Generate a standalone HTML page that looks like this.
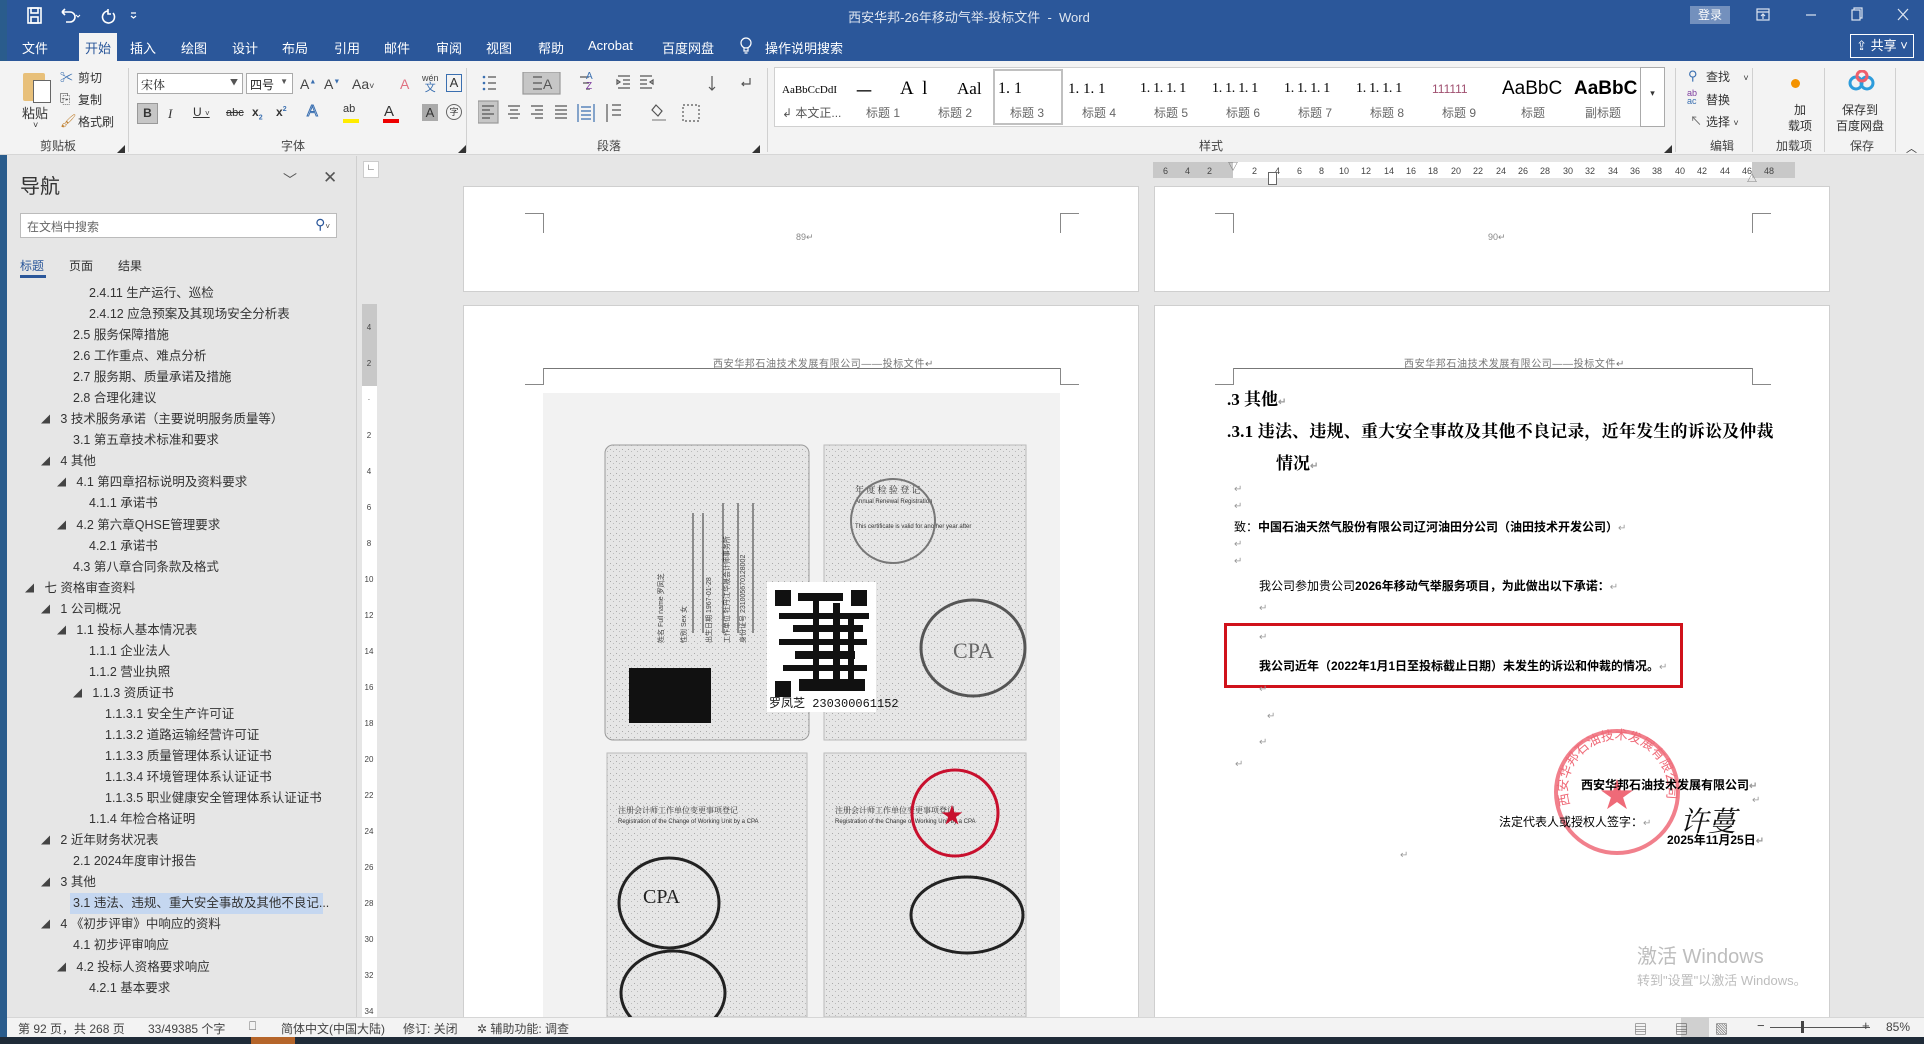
<!DOCTYPE html>
<html><head><meta charset="utf-8">
<style>
*{margin:0;padding:0;box-sizing:border-box}
body{width:1924px;height:1044px;overflow:hidden;position:relative;background:#e6e6e6;font-family:"Liberation Sans","Noto Sans CJK SC",sans-serif;color:#333}
.a{position:absolute;white-space:nowrap}
.t{font-size:13px}
#title{left:0;top:0;width:1924px;height:61px;background:#2b579a}
#rib{left:0;top:61px;width:1924px;height:94px;background:#f3f3f3;border-bottom:1px solid #d6d6d6}
.tab{color:#fff;font-size:13px;top:38px}
.gl{font-size:12px;color:#444;top:137px}
.sep{width:1px;background:#d0d0d0;top:68px;height:84px}
.nav{font-size:13px;color:#333}
.nav div{height:21.05px;line-height:21px;overflow:hidden}
.tri{font-size:9px;color:#444;line-height:10px;vertical-align:middle}
.page{background:#fff;border:1px solid #cfcfcf}
.ret{font-size:10px;color:#999}
.cm{position:absolute;border-color:#888;border-style:solid}
.rn{font-size:9px;color:#444;top:166px}
.b{font-weight:bold}
</style></head><body>
<div class="a" id="title"></div>
<div class="a" style="left:0;top:0;width:7px;height:1037px;background:#2a5c8c"></div>
<svg class="a" style="left:26px;top:6px" width="140" height="20" viewBox="0 0 140 20" fill="none" stroke="#fff" stroke-width="1.6">
<rect x="2" y="2" width="13" height="15"/><rect x="5" y="2" width="7" height="5"/><rect x="5" y="11" width="7" height="6"/>
<path d="M36 6 h8 a5 5 0 0 1 0 10 h-4 M36 6 l3 -3 M36 6 l3 3"/><path d="M50 9 l2 2 l2 -2" stroke-width="1"/>
<path d="M82 5 a6 6 0 1 0 5 2 M82 3 v5 h3"/><path d="M105 7 h5 M105 10 l2.5 2 l2.5 -2" stroke-width="1.2"/>
</svg>
<div class="a" style="left:0;width:1924px;top:7px;text-align:center;color:#dfe6f0;font-size:13px;padding-left:14px">西安华邦-26年移动气举-投标文件 &nbsp;-&nbsp; Word</div>
<div class="a" style="left:1690px;top:6px;width:40px;height:18px;background:#7390bd;color:#fff;font-size:12px;text-align:center;line-height:18px">登录</div>
<svg class="a" style="left:1752px;top:6px" width="170" height="18" fill="none" stroke="#dce4f0" stroke-width="1.2">
<rect x="5" y="3" width="12" height="11"/><path d="M5 6 h12 M11 8 v5 M9 10 l2 -2 l2 2"/>
<path d="M54 9 h10"/><rect x="100" y="4" width="8" height="10"/><path d="M102 4 v-2 h8 v10 h-2"/>
<path d="M146 3 l10 11 M156 3 l-10 11"/></svg>
<div class="a" style="left:79px;top:33px;width:38px;height:28px;background:#f3f3f3"></div>
<div class="a tab" style="left:22px">文件</div>
<div class="a tab" style="left:78px;color:#2b579a;width:40px;text-align:center">开始</div>
<div class="a tab" style="left:130px">插入</div>
<div class="a tab" style="left:181px">绘图</div>
<div class="a tab" style="left:232px">设计</div>
<div class="a tab" style="left:282px">布局</div>
<div class="a tab" style="left:334px">引用</div>
<div class="a tab" style="left:384px">邮件</div>
<div class="a tab" style="left:436px">审阅</div>
<div class="a tab" style="left:486px">视图</div>
<div class="a tab" style="left:538px">帮助</div>
<div class="a tab" style="left:588px">Acrobat</div>
<div class="a tab" style="left:662px">百度网盘</div>
<svg class="a" style="left:739px;top:37px" width="14" height="18" fill="none" stroke="#fff" stroke-width="1.2"><circle cx="7" cy="6" r="5"/><path d="M5 11 v3 h4 v-3 M5.5 16 h3"/></svg>
<div class="a tab" style="left:765px">操作说明搜索</div>
<div class="a" style="left:1850px;top:34px;width:64px;height:24px;border:1px solid #fff;color:#fff;font-size:13px;line-height:22px;text-align:center">⇪ 共享 ˅</div>

<div class="a" id="rib"></div>
<div class="a" style="left:23px;top:73px;width:22px;height:28px;background:#e8c07a;border-radius:2px"></div>
<div class="a" style="left:33px;top:80px;width:18px;height:23px;background:#fff;border:1px solid #666"></div>
<div class="a t" style="left:22px;top:103px;font-size:13px">粘贴</div>
<div class="a" style="left:33px;top:120px;font-size:9px">˅</div>
<div class="a t" style="left:60px;top:67px;color:#3a6fb0">✂</div><div class="a t" style="left:78px;top:69px;font-size:12px">剪切</div>
<div class="a t" style="left:60px;top:91px">⎘</div><div class="a t" style="left:78px;top:91px;font-size:12px">复制</div>
<div class="a t" style="left:60px;top:113px;color:#c08030">🖌</div><div class="a t" style="left:78px;top:113px;font-size:12px">格式刷</div>
<div class="a gl" style="left:40px">剪贴板</div>
<div class="a" style="left:117px;top:144px;font-size:8px">◢</div>
<div class="a sep" style="left:128px"></div>
<div class="a" style="left:137px;top:73px;width:106px;height:21px;background:#fff;border:1px solid #aaa;font-size:12px;padding:2px 3px;color:#222;font-family:'Noto Serif CJK SC',serif">宋体<span style="position:absolute;right:4px;top:3px;font-size:8px;color:#555">▼</span></div>
<div class="a" style="left:246px;top:73px;width:47px;height:21px;background:#fff;border:1px solid #aaa;font-size:12px;padding:2px 3px;color:#222">四号<span style="position:absolute;right:4px;top:3px;font-size:8px;color:#555">▼</span></div>
<div class="a" style="left:300px;top:76px;font-size:14px;color:#444">A<sup style="font-size:7px;color:#3a6fb0">▲</sup> &nbsp;A<sup style="font-size:7px;color:#3a6fb0">▼</sup> &nbsp;&nbsp;Aa<span style="font-size:9px">˅</span></div>
<div class="a" style="left:400px;top:76px;font-size:14px;color:#e07080">A</div>
<div class="a" style="left:422px;top:73px;font-size:9px;color:#444;line-height:10px;text-align:center">wén<br><span style="color:#3a6fb0;font-size:11px">文</span></div>
<div class="a" style="left:446px;top:74px;width:16px;height:18px;border:1px solid #3a6fb0;font-size:13px;text-align:center;line-height:16px">A</div>
<div class="a" style="left:137px;top:103px;width:21px;height:21px;background:#c6c6c6;border:1px solid #999;font-size:12px;font-weight:bold;text-align:center;line-height:19px">B</div>
<div class="a" style="left:168px;top:106px;font-size:13px;font-style:italic;font-family:'Liberation Serif',serif">I</div>
<div class="a" style="left:193px;top:105px;font-size:12px;text-decoration:underline">U <span style="font-size:8px;text-decoration:none">˅</span></div>
<div class="a" style="left:226px;top:107px;font-size:11px;text-decoration:line-through">abc</div>
<div class="a" style="left:252px;top:105px;font-size:12px;font-weight:bold">x<sub style="font-size:7px;color:#3a6fb0">2</sub></div>
<div class="a" style="left:276px;top:105px;font-size:12px;font-weight:bold">x<sup style="font-size:7px;color:#3a6fb0">2</sup></div>
<div class="a" style="left:307px;top:103px;font-size:16px;color:#fff;-webkit-text-stroke:1px #3a6fb0">A</div>
<div class="a" style="left:343px;top:103px;font-size:11px">ab</div><div class="a" style="left:343px;top:119px;width:16px;height:4px;background:#ffec00"></div>
<div class="a" style="left:384px;top:103px;font-size:15px">A</div><div class="a" style="left:383px;top:119px;width:16px;height:4px;background:#e00"></div>
<div class="a" style="left:422px;top:104px;width:16px;height:17px;background:#aaa;font-size:13px;text-align:center;line-height:17px">A</div>
<div class="a" style="left:446px;top:104px;width:16px;height:16px;border:1px solid #666;border-radius:50%;font-size:9px;text-align:center;line-height:14px">字</div>
<div class="a gl" style="left:281px">字体</div>
<div class="a" style="left:458px;top:144px;font-size:8px">◢</div>
<div class="a sep" style="left:466px"></div>
<svg class="a" style="left:478px;top:72px" width="290" height="56" fill="none" stroke="#555" stroke-width="1.2">
<g><circle cx="6" cy="5" r="1.3" fill="#3a6fb0" stroke="none"/><circle cx="6" cy="11" r="1.3" fill="#3a6fb0" stroke="none"/><circle cx="6" cy="17" r="1.3" fill="#3a6fb0" stroke="none"/><path d="M10 5h8M10 11h8M10 17h8"/></g>
<rect x="45" y="0" width="37" height="22" fill="#c6c6c6" stroke="#999"/><path d="M55 5h9M55 11h9M55 17h9"/>
<path d="M102 5h9M105 11h6M108 17h4"/>
<path d="M140 4h12M145 8h7M145 12h7M140 16h12M142 10l-3 -2v4z"/><path d="M162 4h12M162 8h7M162 12h7M162 16h12M172 10l3 -2v4z"/>
<path d="M234 4v14M231 15l3 3 3-3"/><path d="M272 6v6h-8M266 10l-2 2 2 2"/>
<rect x="0" y="29" width="20" height="22" fill="#c6c6c6" stroke="#999"/><path d="M4 34h12M4 38h8M4 42h12M4 46h8"/>
<path d="M30 34h12M32 38h8M30 42h12M32 46h8"/><path d="M53 34h12M57 38h8M53 42h12M57 46h8"/><path d="M77 34h12M77 38h12M77 42h12M77 46h12"/>
<path d="M100 32v18M116 32v18M103 35h10M103 39h10M103 43h10M103 47h10" stroke="#3a6fb0"/>
<path d="M134 33h9M134 38h9M134 43h9M129 32v18" /><path d="M174 48h14" stroke="#888"/><path d="M178 33l6 6-4 5-6-6z"/>
<path d="M205 33h16v16h-16z" stroke-dasharray="2 2"/>
</svg>
<div class="a" style="left:543px;top:76px;font-size:14px;color:#555">A</div>
<div class="a" style="left:586px;top:72px;font-size:10px;color:#3a6fb0;line-height:10px">A<br><span style="color:#8040a0">Z</span></div>
<div class="a gl" style="left:597px">段落</div>
<div class="a" style="left:752px;top:144px;font-size:8px">◢</div>
<div class="a sep" style="left:767px"></div>
<div class="a" style="left:774px;top:67px;width:891px;height:60px;background:#fff;border:1px solid #d0d0d0"></div>
<div class="a" style="left:993px;top:69px;width:70px;height:56px;border:2px solid #c0c0c0;background:#fff"></div>
<div class="a" style="left:1640px;top:67px;width:25px;height:60px;border:1px solid #aaa;background:#fff;font-size:9px;text-align:center;padding-top:20px">▾</div>
<div class="a" style="left:782px;top:84px;font-family:'Liberation Serif',serif;font-size:11px;color:#000">AaBbCcDdI</div>
<div class="a" style="left:856px;top:78px;font-size:16px;color:#000">一</div>
<div class="a" style="left:900px;top:78px;font-family:'Liberation Serif',serif;font-size:19px;color:#000">A &nbsp;l</div>
<div class="a" style="left:957px;top:79px;font-family:'Liberation Serif',serif;font-size:17px;color:#000">Aal</div>
<div class="a" style="left:998px;top:80px;font-family:'Liberation Serif',serif;font-size:16px;color:#000">1. 1</div>
<div class="a" style="left:1068px;top:81px;font-family:'Liberation Serif',serif;font-size:15px;color:#000">1. 1. 1</div>
<div class="a" style="left:1140px;top:81px;font-family:'Liberation Serif',serif;font-size:14px;color:#000;letter-spacing:-0.3px">1. 1. 1. 1</div>
<div class="a" style="left:1212px;top:81px;font-family:'Liberation Serif',serif;font-size:14px;color:#000;letter-spacing:-0.3px">1. 1. 1. 1</div>
<div class="a" style="left:1284px;top:81px;font-family:'Liberation Serif',serif;font-size:14px;color:#000;letter-spacing:-0.3px">1. 1. 1. 1</div>
<div class="a" style="left:1356px;top:81px;font-family:'Liberation Serif',serif;font-size:14px;color:#000;letter-spacing:-0.3px">1. 1. 1. 1</div>
<div class="a" style="left:1432px;top:82px;font-size:12px;color:#a05070">111111</div>
<div class="a" style="left:1502px;top:78px;font-size:19px;color:#000">AaBbC</div>
<div class="a" style="left:1574px;top:78px;font-size:19px;color:#000;font-weight:bold">AaBbC</div>
<div class="a" style="left:782px;top:104px;font-size:12px;color:#555">↲ 本文正...</div>
<div class="a" style="left:866px;top:104px;font-size:12px;color:#666">标题 1</div>
<div class="a" style="left:938px;top:104px;font-size:12px;color:#666">标题 2</div>
<div class="a" style="left:1010px;top:104px;font-size:12px;color:#666">标题 3</div>
<div class="a" style="left:1082px;top:104px;font-size:12px;color:#666">标题 4</div>
<div class="a" style="left:1154px;top:104px;font-size:12px;color:#666">标题 5</div>
<div class="a" style="left:1226px;top:104px;font-size:12px;color:#666">标题 6</div>
<div class="a" style="left:1298px;top:104px;font-size:12px;color:#666">标题 7</div>
<div class="a" style="left:1370px;top:104px;font-size:12px;color:#666">标题 8</div>
<div class="a" style="left:1442px;top:104px;font-size:12px;color:#666">标题 9</div>
<div class="a" style="left:1521px;top:104px;font-size:12px;color:#666">标题</div>
<div class="a" style="left:1585px;top:104px;font-size:12px;color:#666">副标题</div>
<div class="a gl" style="left:1199px">样式</div>
<div class="a" style="left:1664px;top:144px;font-size:8px">◢</div>
<div class="a sep" style="left:1675px"></div>
<div class="a" style="left:1688px;top:68px;font-size:13px;color:#3a6fb0">⚲</div><div class="a" style="left:1706px;top:68px;font-size:12px">查找 &nbsp;&nbsp;&nbsp;<span style="font-size:9px">˅</span></div>
<div class="a" style="left:1687px;top:89px;font-size:9px;line-height:8px;color:#8040a0">ab<br><span style="color:#3a6fb0">ac</span></div><div class="a" style="left:1706px;top:91px;font-size:12px">替换</div>
<div class="a" style="left:1690px;top:112px;font-size:12px;color:#666">↖</div><div class="a" style="left:1706px;top:113px;font-size:12px">选择 <span style="font-size:9px">˅</span></div>
<div class="a gl" style="left:1710px">编辑</div>
<div class="a sep" style="left:1752px"></div>
<div class="a" style="left:1791px;top:79px;width:9px;height:9px;border-radius:50%;background:#f39200"></div>
<div class="a" style="left:1788px;top:102px;font-size:12px;text-align:center;line-height:16px">加<br>载项</div>
<div class="a gl" style="left:1776px">加载项</div>
<div class="a sep" style="left:1824px"></div>
<svg class="a" style="left:1848px;top:70px" width="28" height="22"><circle cx="8" cy="13" r="6" fill="none" stroke="#2d9cdb" stroke-width="3"/><circle cx="19" cy="13" r="6" fill="none" stroke="#2d9cdb" stroke-width="3"/><circle cx="14" cy="6" r="5" fill="none" stroke="#ef5f6b" stroke-width="3"/></svg>
<div class="a" style="left:1836px;top:102px;font-size:12px;text-align:center;line-height:16px">保存到<br>百度网盘</div>
<div class="a gl" style="left:1850px">保存</div>
<div class="a sep" style="left:1895px"></div>
<div class="a" style="left:1906px;top:140px;font-size:11px">︿</div>

<div class="a" style="left:7px;top:156px;width:350px;height:861px;background:#e6e6e6;border-right:1px solid #cfcfcf"></div>
<div class="a" style="left:20px;top:170px;font-size:20px;color:#333">导航</div>
<div class="a" style="left:283px;top:170px;font-size:14px;color:#555">﹀</div>
<div class="a" style="left:323px;top:168px;font-size:17px;color:#555">✕</div>
<div class="a" style="left:20px;top:213px;width:317px;height:25px;background:#fff;border:1px solid #bbb;font-size:12px;color:#666;padding:4px 6px">在文档中搜索<span style="position:absolute;right:6px;top:2px;color:#2b579a;font-size:14px">⚲<span style="font-size:8px;color:#444">˅</span></span></div>
<div class="a" style="left:20px;top:257px;font-size:12px;color:#2b579a">标题</div>
<div class="a" style="left:20px;top:275px;width:26px;height:3px;background:#2b579a"></div>
<div class="a" style="left:69px;top:257px;font-size:12px;color:#333">页面</div>
<div class="a" style="left:118px;top:257px;font-size:12px;color:#333">结果</div>
<div class="a" style="left:70px;top:893px;width:253px;height:21px;background:#c5d7f0"></div>
<div class="a nav" style="left:0;top:283px;font-size:12.5px">
<div style="padding-left:89px">2.4.11 生产运行、巡检</div>
<div style="padding-left:89px">2.4.12 应急预案及其现场安全分析表</div>
<div style="padding-left:73px">2.5 服务保障措施</div>
<div style="padding-left:73px">2.6 工作重点、难点分析</div>
<div style="padding-left:73px">2.7 服务期、质量承诺及措施</div>
<div style="padding-left:73px">2.8 合理化建议</div>
<div style="padding-left:41px"><span class="tri">◢</span>&nbsp;&nbsp; 3 技术服务承诺（主要说明服务质量等）</div>
<div style="padding-left:73px">3.1 第五章技术标准和要求</div>
<div style="padding-left:41px"><span class="tri">◢</span>&nbsp;&nbsp; 4 其他</div>
<div style="padding-left:57px"><span class="tri">◢</span>&nbsp;&nbsp; 4.1 第四章招标说明及资料要求</div>
<div style="padding-left:89px">4.1.1 承诺书</div>
<div style="padding-left:57px"><span class="tri">◢</span>&nbsp;&nbsp; 4.2 第六章QHSE管理要求</div>
<div style="padding-left:89px">4.2.1 承诺书</div>
<div style="padding-left:73px">4.3 第八章合同条款及格式</div>
<div style="padding-left:25px"><span class="tri">◢</span>&nbsp;&nbsp; 七 资格审查资料</div>
<div style="padding-left:41px"><span class="tri">◢</span>&nbsp;&nbsp; 1 公司概况</div>
<div style="padding-left:57px"><span class="tri">◢</span>&nbsp;&nbsp; 1.1 投标人基本情况表</div>
<div style="padding-left:89px">1.1.1 企业法人</div>
<div style="padding-left:89px">1.1.2 营业执照</div>
<div style="padding-left:73px"><span class="tri">◢</span>&nbsp;&nbsp; 1.1.3 资质证书</div>
<div style="padding-left:105px">1.1.3.1 安全生产许可证</div>
<div style="padding-left:105px">1.1.3.2 道路运输经营许可证</div>
<div style="padding-left:105px">1.1.3.3 质量管理体系认证证书</div>
<div style="padding-left:105px">1.1.3.4 环境管理体系认证证书</div>
<div style="padding-left:105px">1.1.3.5 职业健康安全管理体系认证证书</div>
<div style="padding-left:89px">1.1.4 年检合格证明</div>
<div style="padding-left:41px"><span class="tri">◢</span>&nbsp;&nbsp; 2 近年财务状况表</div>
<div style="padding-left:73px">2.1 2024年度审计报告</div>
<div style="padding-left:41px"><span class="tri">◢</span>&nbsp;&nbsp; 3 其他</div>
<div style="padding-left:73px">3.1 违法、违规、重大安全事故及其他不良记...</div>
<div style="padding-left:41px"><span class="tri">◢</span>&nbsp;&nbsp; 4 《初步评审》中响应的资料</div>
<div style="padding-left:73px">4.1 初步评审响应</div>
<div style="padding-left:57px"><span class="tri">◢</span>&nbsp;&nbsp; 4.2 投标人资格要求响应</div>
<div style="padding-left:89px">4.2.1 基本要求</div>
</div>

<div class="a" style="left:363px;top:161px;width:16px;height:17px;background:#fff;border:1px solid #ccc;font-size:9px;text-align:center">∟</div>
<div class="a" style="left:362px;top:304px;width:15px;height:713px;background:#fff"></div>
<div class="a" style="left:362px;top:304px;width:15px;height:82px;background:#c8c8c8"></div>
<div class="a" style="left:364px;top:310px;width:10px;font-size:8px;color:#444;line-height:36px;text-align:center">4<br>2<br>·<br>2<br>4<br>6<br>8<br>10<br>12<br>14<br>16<br>18<br>20<br>22<br>24<br>26<br>28<br>30<br>32<br>34</div>

<div class="a" style="left:1153px;top:162px;width:642px;height:16px;background:#c8c8c8"></div>
<div class="a" style="left:1233px;top:162px;width:519px;height:16px;background:#fff"></div>
<div class="a rn" style="left:1163px">6</div><div class="a rn" style="left:1185px">4</div><div class="a rn" style="left:1207px">2</div>
<div class="a rn" style="left:1252px">2</div>
<div class="a rn" style="left:1275px">4</div><div class="a rn" style="left:1297px">6</div><div class="a rn" style="left:1319px">8</div>
<div class="a rn" style="left:1339px">10</div><div class="a rn" style="left:1361px">12</div><div class="a rn" style="left:1384px">14</div><div class="a rn" style="left:1406px">16</div><div class="a rn" style="left:1428px">18</div><div class="a rn" style="left:1451px">20</div><div class="a rn" style="left:1473px">22</div><div class="a rn" style="left:1496px">24</div><div class="a rn" style="left:1518px">26</div><div class="a rn" style="left:1540px">28</div><div class="a rn" style="left:1563px">30</div><div class="a rn" style="left:1585px">32</div><div class="a rn" style="left:1608px">34</div><div class="a rn" style="left:1630px">36</div><div class="a rn" style="left:1652px">38</div><div class="a rn" style="left:1675px">40</div><div class="a rn" style="left:1697px">42</div><div class="a rn" style="left:1720px">44</div><div class="a rn" style="left:1742px">46</div><div class="a rn" style="left:1764px">48</div>
<div class="a" style="left:1228px;top:158px;font-size:10px;color:#666">▽</div>
<div class="a" style="left:1268px;top:172px;width:9px;height:13px;border:1px solid #666;background:#fff"></div>
<div class="a" style="left:1747px;top:170px;font-size:10px;color:#666">△</div>

<div class="a page" style="left:463px;top:186px;width:676px;height:106px"></div>
<div class="cm" style="left:525px;top:213px;width:19px;height:20px;border-width:1px 1px 0 0"></div>
<div class="cm" style="left:1060px;top:213px;width:19px;height:20px;border-width:1px 0 0 1px"></div>
<div class="a" style="left:796px;top:232px;font-size:9px;color:#888">89↵</div>
<div class="a page" style="left:463px;top:305px;width:676px;height:720px"></div>
<div class="a" style="left:713px;top:355px;font-size:10px;color:#777;letter-spacing:0.6px">西安华邦石油技术发展有限公司——投标文件↵</div>
<div class="a" style="left:543px;top:368px;width:517px;height:1px;background:#777"></div>
<div class="cm" style="left:525px;top:368px;width:19px;height:17px;border-width:0 1px 1px 0"></div>
<div class="cm" style="left:1060px;top:368px;width:19px;height:17px;border-width:0 0 1px 1px"></div>
<div class="a" style="left:543px;top:393px;width:517px;height:624px;background:#f2f2f2"></div>
<svg class="a" style="left:543px;top:393px" width="517" height="624">
<defs><pattern id="n" width="6" height="6" patternUnits="userSpaceOnUse"><rect width="6" height="6" fill="#e6e6e6"/><rect x="1" y="2" width="1" height="1" fill="#aaa"/><rect x="4" y="4" width="1" height="1" fill="#bbb"/></pattern></defs>
<rect x="62" y="52" width="204" height="295" rx="8" fill="url(#n)" stroke="#999"/>
<rect x="281" y="52" width="202" height="295" fill="url(#n)" stroke="#bbb"/>
<g stroke="#333" stroke-width="1"><path d="M150 120v120M160 120v120M180 110v130M195 110v130M210 110v130"/></g>
<g fill="#444" font-size="7" font-family="Liberation Sans"><text x="120" y="250" transform="rotate(-90 120 250)">姓名 Full name 罗凤芝</text><text x="143" y="250" transform="rotate(-90 143 250)">性别 Sex 女</text><text x="168" y="250" transform="rotate(-90 168 250)">出生日期 1967-01-28</text><text x="186" y="250" transform="rotate(-90 186 250)">工作单位 牡丹江华晟会计师事务所</text><text x="202" y="250" transform="rotate(-90 202 250)">身份证号 231005670128002</text></g>
<rect x="86" y="275" width="82" height="55" fill="#111"/>
<rect x="224" y="189" width="109" height="130" fill="#fff"/>
<g fill="#111"><rect x="232" y="197" width="16" height="16"/><rect x="308" y="197" width="16" height="16"/><rect x="232" y="288" width="16" height="16"/>
<rect x="255" y="200" width="45" height="8"/><rect x="236" y="220" width="90" height="6"/><rect x="250" y="232" width="70" height="7"/><rect x="236" y="246" width="88" height="6"/><rect x="252" y="258" width="60" height="8"/><rect x="240" y="272" width="84" height="6"/><rect x="256" y="286" width="66" height="12"/>
<rect x="270" y="205" width="6" height="90"/><rect x="290" y="210" width="7" height="85"/><rect x="305" y="220" width="6" height="70"/></g>
<text x="226" y="314" font-size="12" fill="#111" font-family="Liberation Mono,Noto Sans CJK SC">罗凤芝 230300061152</text>
<text x="312" y="100" font-size="9" fill="#333" font-family="Noto Serif CJK SC">年 度 检 验 登 记</text>
<text x="312" y="110" font-size="6" fill="#333">Annual Renewal Registration</text>
<text x="312" y="135" font-size="6" fill="#333">This certificate is valid for another year after</text>
<circle cx="350" cy="128" r="42" fill="none" stroke="#777" stroke-width="2"/>
<ellipse cx="430" cy="255" rx="52" ry="48" fill="none" stroke="#555" stroke-width="3"/>
<text x="410" y="265" font-size="22" fill="#666" font-family="Liberation Serif">CPA</text>
<rect x="64" y="360" width="200" height="264" fill="url(#n)" stroke="#bbb"/>
<rect x="281" y="360" width="202" height="264" fill="url(#n)" stroke="#bbb"/>
<text x="75" y="420" font-size="8" fill="#333" font-family="Noto Serif CJK SC">注册会计师工作单位变更事项登记</text>
<text x="292" y="420" font-size="8" fill="#333" font-family="Noto Serif CJK SC">注册会计师工作单位变更事项登记</text>
<text x="75" y="430" font-size="6" fill="#333">Registration of the Change of Working Unit by a CPA</text>
<text x="292" y="430" font-size="6" fill="#333">Registration of the Change of Working Unit by a CPA</text>
<ellipse cx="126" cy="510" rx="50" ry="45" fill="none" stroke="#222" stroke-width="3"/>
<text x="100" y="510" font-size="20" fill="#222" font-family="Liberation Serif">CPA</text>
<ellipse cx="424" cy="522" rx="56" ry="38" fill="none" stroke="#222" stroke-width="3"/>
<ellipse cx="130" cy="600" rx="52" ry="42" fill="none" stroke="#222" stroke-width="3"/>
<circle cx="412" cy="420" r="43" fill="none" stroke="#c8102e" stroke-width="3"/>
<text x="398" y="430" font-size="22" fill="#c8102e">★</text>
</svg>

<div class="a page" style="left:1154px;top:186px;width:676px;height:106px"></div>
<div class="cm" style="left:1215px;top:213px;width:19px;height:20px;border-width:1px 1px 0 0"></div>
<div class="cm" style="left:1752px;top:213px;width:19px;height:20px;border-width:1px 0 0 1px"></div>
<div class="a" style="left:1488px;top:232px;font-size:9px;color:#888">90↵</div>
<div class="a page" style="left:1154px;top:305px;width:676px;height:720px"></div>
<div class="a" style="left:1404px;top:355px;font-size:10px;color:#777;letter-spacing:0.6px">西安华邦石油技术发展有限公司——投标文件↵</div>
<div class="a" style="left:1233px;top:368px;width:519px;height:1px;background:#777"></div>
<div class="cm" style="left:1215px;top:368px;width:19px;height:17px;border-width:0 1px 1px 0"></div>
<div class="cm" style="left:1752px;top:368px;width:19px;height:17px;border-width:0 0 1px 1px"></div>
<div class="a b" style="left:1227px;top:385px;font-size:17px;color:#000;font-family:'Liberation Serif','Noto Serif CJK SC',serif">.3 其他<span class="ret">↵</span></div>
<div class="a b" style="left:1227px;top:417px;font-size:17px;color:#000;font-family:'Liberation Serif','Noto Serif CJK SC',serif;letter-spacing:0.2px">.3.1 违法、违规、重大安全事故及其他不良记录，近年发生的诉讼及仲裁</div>
<div class="a b" style="left:1276px;top:449px;font-size:17px;color:#000;font-family:'Liberation Serif','Noto Serif CJK SC',serif">情况<span class="ret">↵</span></div>
<div class="a ret" style="left:1234px;top:484px">↵</div>
<div class="a ret" style="left:1234px;top:501px">↵</div>
<div class="a" style="left:1234px;top:518px;font-size:12px;color:#000">致：<b>中国石油天然气股份有限公司辽河油田分公司（油田技术开发公司）</b><span class="ret">↵</span></div>
<div class="a ret" style="left:1234px;top:539px">↵</div>
<div class="a ret" style="left:1234px;top:556px">↵</div>
<div class="a" style="left:1259px;top:577px;font-size:12px;color:#000">我公司参加贵公司<b>2026年移动气举服务项目，为此做出以下承诺：</b><span class="ret">↵</span></div>
<div class="a ret" style="left:1259px;top:603px">↵</div>
<div class="a" style="left:1224px;top:623px;width:459px;height:65px;border:3px solid #d0121b"></div>
<div class="a ret" style="left:1259px;top:632px">↵</div>
<div class="a b" style="left:1259px;top:657px;font-size:12px;color:#000">我公司近年（2022年1月1日至投标截止日期）未发生的诉讼和仲裁的情况。<span class="ret" style="font-weight:normal">↵</span></div>
<div class="a ret" style="left:1259px;top:684px">↵</div>
<div class="a ret" style="left:1267px;top:711px">↵</div>
<div class="a ret" style="left:1259px;top:737px">↵</div>
<div class="a ret" style="left:1235px;top:759px">↵</div>
<svg class="a" style="left:1550px;top:725px" width="135" height="135"><defs><path id="arc" d="M20 80 A50 50 0 1 1 115 80"/></defs><circle cx="67" cy="67" r="61" fill="none" stroke="#ef6a78" stroke-width="4" opacity="0.85"/><text x="50" y="82" font-size="34" fill="#ef6a78">★</text><text font-size="13" fill="#ef6a78"><textPath href="#arc">西安华邦石油技术发展有限公司</textPath></text></svg>
<div class="a b" style="left:1581px;top:776px;font-size:12px;color:#000">西安华邦石油技术发展有限公司<span class="ret">↵</span></div>
<div class="a ret" style="left:1752px;top:795px">↵</div>
<div class="a" style="left:1499px;top:813px;font-size:12px;color:#000">法定代表人或授权人签字：<span class="ret">↵</span></div>
<div class="a" style="left:1680px;top:800px;font-size:28px;color:#111;font-family:'Noto Serif CJK SC',serif;font-style:italic">许蔓</div>
<div class="a b" style="left:1667px;top:831px;font-size:12px;color:#000">2025年11月25日<span class="ret">↵</span></div>
<div class="a ret" style="left:1400px;top:850px">↵</div>
<div class="a" style="left:1637px;top:940px;font-size:20px;color:#bdbdbd">激活 Windows</div>
<div class="a" style="left:1637px;top:970px;font-size:13px;color:#bdbdbd">转到"设置"以激活 Windows。</div>
<div class="a" style="left:1830px;top:305px;width:94px;height:712px;background:#e6e6e6"></div>

<div class="a" style="left:7px;top:1017px;width:1917px;height:20px;background:#f3f3f3;border-top:1px solid #d6d6d6"></div>
<div class="a" style="left:18px;top:1020px;font-size:12px;color:#444">第 92 页，共 268 页</div>
<div class="a" style="left:148px;top:1020px;font-size:12px;color:#444">33/49385 个字</div>
<div class="a" style="left:249px;top:1019px;font-size:12px;color:#555">⎕</div>
<div class="a" style="left:281px;top:1020px;font-size:12px;color:#444">简体中文(中国大陆)</div>
<div class="a" style="left:403px;top:1020px;font-size:12px;color:#444">修订: 关闭</div>
<div class="a" style="left:477px;top:1020px;font-size:12px;color:#444">✲ 辅助功能: 调查</div>
<div class="a" style="left:1681px;top:1017px;width:28px;height:20px;background:#d0d0d0"></div>
<div class="a" style="left:1634px;top:1019px;font-size:13px;color:#555">▤</div>
<div class="a" style="left:1675px;top:1019px;font-size:13px;color:#444">▤</div>
<div class="a" style="left:1715px;top:1019px;font-size:13px;color:#555">▧</div>
<div class="a" style="left:1757px;top:1018px;font-size:13px;color:#444">−</div>
<div class="a" style="left:1770px;top:1027px;width:100px;height:1px;background:#555"></div>
<div class="a" style="left:1801px;top:1021px;width:3px;height:12px;background:#444"></div>
<div class="a" style="left:1862px;top:1018px;font-size:13px;color:#444">+</div>
<div class="a" style="left:1886px;top:1020px;font-size:12px;color:#444">85%</div>
<div class="a" style="left:0;top:1037px;width:1924px;height:7px;background:#1f2b38"></div>
<div class="a" style="left:251px;top:1037px;width:44px;height:7px;background:#b5652a"></div>
</body></html>
